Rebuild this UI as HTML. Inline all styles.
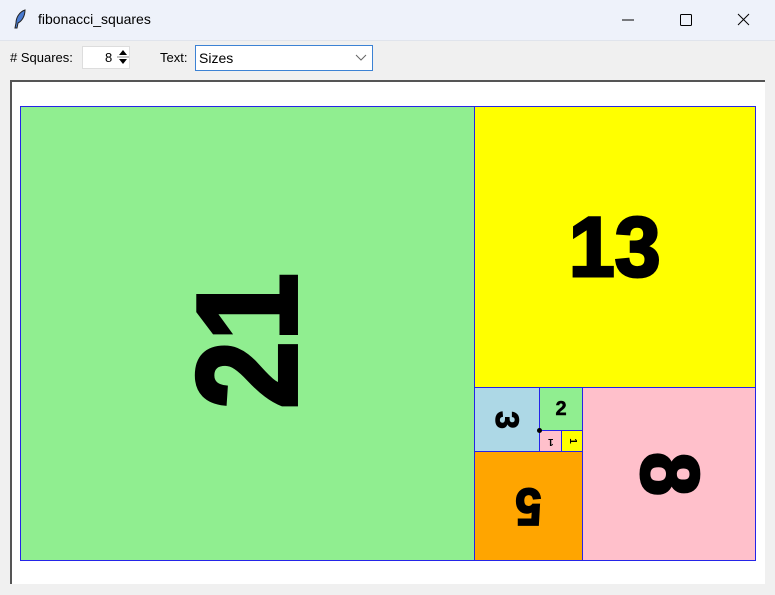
<!DOCTYPE html><html><head><style>
body{margin:0;width:775px;height:595px;background:#f0f0f0;font-family:"Liberation Sans",sans-serif;position:relative;overflow:hidden}
.title{position:absolute;left:0;top:0;width:775px;height:40px;background:#eef2fa;border-bottom:1px solid #e0e4ec}
.t{position:absolute;font-size:14px;color:#000}
.sq{position:absolute;box-sizing:border-box;border:1px solid #2424e8;display:flex;align-items:center;justify-content:center;font-weight:bold;color:#000}
.sq span{display:inline-block;line-height:1}
</style></head><body>
<div class="title"></div>
<svg style="position:absolute;left:13px;top:9px" width="14" height="20" viewBox="0 0 14 20"><path d="M12 1 C6 3 3 9 3 14 L2 19 L4 19 L5 14 C9 12 12 7 12 1Z" fill="#4a7bd0" stroke="#222" stroke-width="1"/></svg>
<div class="t" style="left:38px;top:11px">fibonacci_squares</div>
<svg style="position:absolute;left:622px;top:12px" width="130" height="16"><line x1="0" y1="8" x2="12" y2="8" stroke="#000"/><rect x="58.5" y="2.5" width="11" height="11" fill="none" stroke="#000" rx="1"/><path d="M116 2 L127 13 M127 2 L116 13" stroke="#000"/></svg>
<div class="t" style="left:10px;top:50px;font-size:13px"># Squares:</div>
<div style="position:absolute;left:82px;top:46px;width:48px;height:23px;background:#fff;border:1px solid #ddd;box-sizing:border-box"></div>
<div class="t" style="left:105px;top:50px;font-size:13px">8</div>
<svg style="position:absolute;left:116px;top:47px" width="14" height="21"><path d="M3 8 L7 3 L11 8Z M3 12 L7 17 L11 12Z" fill="#000"/><line x1="1" y1="10" x2="13" y2="10" stroke="#888"/></svg>
<div class="t" style="left:160px;top:50px;font-size:13px">Text:</div>
<div style="position:absolute;left:195px;top:45px;width:178px;height:26px;background:#fff;border:1px solid #3c82d4;box-sizing:border-box"></div>
<div class="t" style="left:199px;top:50px;font-size:14px">Sizes</div>
<svg style="position:absolute;left:355px;top:54px" width="12" height="8"><path d="M1 1 L6 6 L11 1" fill="none" stroke="#666"/></svg>
<div style="position:absolute;left:10px;top:80px;width:755px;height:504px;background:#fff;border-top:2px solid #555;border-left:2px solid #555;box-sizing:border-box"></div>
<div class="sq" style="left:20px;top:106px;width:455px;height:455px;background:#90ee90"><span style="font-size:142px;-webkit-text-stroke:4px #000;transform:translateY(7px) rotate(-90deg) scaleX(0.86)">21</span></div>
<div class="sq" style="left:474px;top:106px;width:282px;height:282px;background:#ffff00"><span style="font-size:84px;-webkit-text-stroke:3px #000;transform:scaleX(0.98)">13</span></div>
<div class="sq" style="left:582px;top:387px;width:174px;height:174px;background:#ffc0cb"><span style="font-size:82px;-webkit-text-stroke:3px #000;transform:rotate(90deg) scaleX(0.95)">8</span></div>
<div class="sq" style="left:474px;top:451px;width:109px;height:110px;background:#ffa500"><span style="font-size:52px;-webkit-text-stroke:2px #000;transform:rotate(180deg) scaleX(0.9)">5</span></div>
<div class="sq" style="left:474px;top:387px;width:66px;height:65px;background:#add8e6"><span style="font-size:32px;-webkit-text-stroke:1px #000;transform:rotate(90deg)">3</span></div>
<div class="sq" style="left:539px;top:387px;width:44px;height:44px;background:#90ee90"><span style="font-size:20px;-webkit-text-stroke:.5px #000">2</span></div>
<div class="sq" style="left:539px;top:430px;width:23px;height:22px;background:#ffc0cb"><span style="font-size:10px;transform:rotate(180deg)">1</span></div>
<div class="sq" style="left:561px;top:430px;width:22px;height:22px;background:#ffff00"><span style="font-size:10px;transform:rotate(90deg)">1</span></div>
<div style="position:absolute;left:537px;top:428px;width:5px;height:5px;border-radius:50%;background:#000"></div>
</body></html>
